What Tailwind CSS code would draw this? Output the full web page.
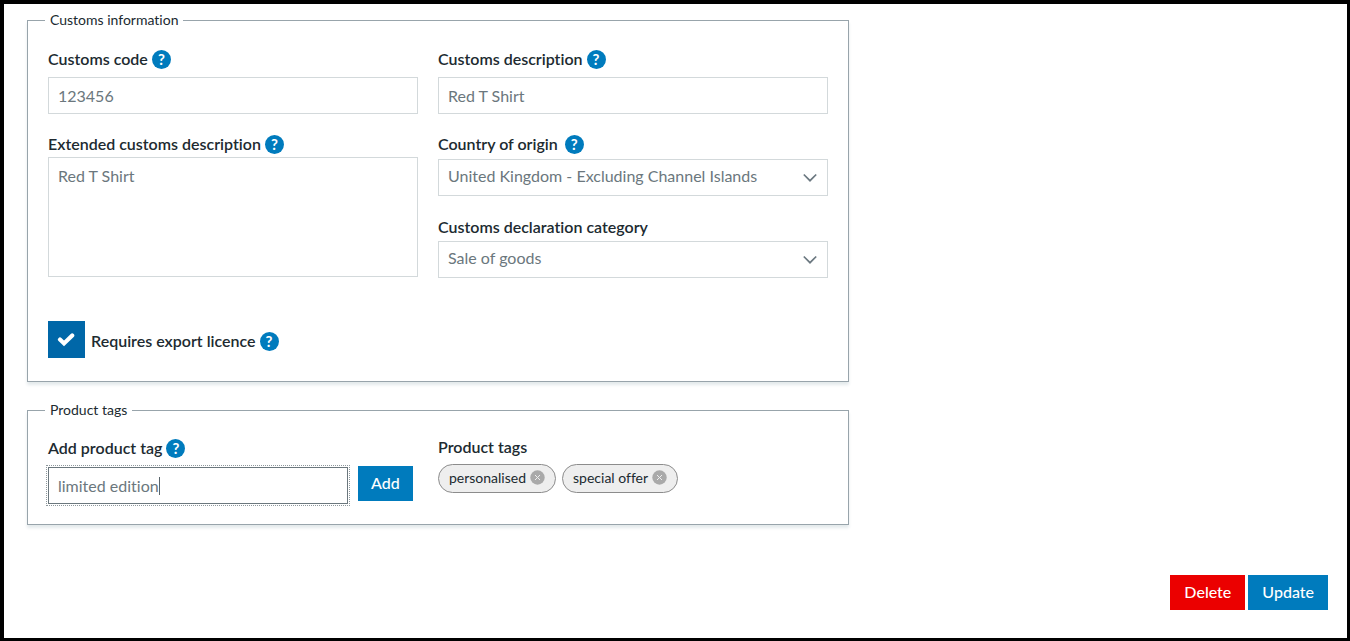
<!DOCTYPE html>
<html lang="en">
<head>
    <meta charset="UTF-8">
    <meta name="viewport" content="width=device-width, initial-scale=1.0">
    <title>Edit product</title>
    <script src="https://cdn.jsdelivr.net/npm/@tailwindcss/browser@4"></script>
</head>
<body class="min-h-screen border-t-4 border-l-4 border-r-3 border-b-3 border-black bg-white font-[Lato,sans-serif] text-base text-[#202a30] [font-variant-ligatures:none]">
    <form class="pt-[6px] pl-[23px] pr-[19px]">
        <fieldset class="max-w-[822px] border border-[#98a4ab] px-5 pb-[23px] shadow-[0_3px_3px_#e4eaec]">
            <legend class="-ml-[3px] px-[5px] text-sm leading-5">Customs information</legend>

            <div class="grid grid-cols-[37fr_39fr] gap-x-5 pt-[18px]">
                <div>
                    <div class="flex h-[22px] items-center gap-1 mb-[7px]">
                        <label for="customsCode" class="font-semibold">Customs code</label>
                        <button type="button" aria-label="Help" class="size-[19px] rounded-full bg-[#007bbd] text-center text-[15px] leading-[19px] font-bold text-white">?</button>
                    </div>
                    <input type="text" id="customsCode" value="123456" class="block h-[37px] w-full border border-[#d3d9db] px-[9px] text-[#6b777d]">
                </div>
                <div>
                    <div class="flex h-[22px] items-center gap-1 mb-[7px]">
                        <label for="customsDescription" class="font-semibold">Customs description</label>
                        <button type="button" aria-label="Help" class="size-[19px] rounded-full bg-[#007bbd] text-center text-[15px] leading-[19px] font-bold text-white">?</button>
                    </div>
                    <input type="text" id="customsDescription" value="Red T Shirt" class="block h-[37px] w-full border border-[#d3d9db] px-[9px] text-[#6b777d]">
                </div>

                <div class="mt-[19px]">
                    <div class="flex h-[22px] items-center gap-1 mb-[2px]">
                        <label for="extendedDescription" class="font-semibold">Extended customs description</label>
                        <button type="button" aria-label="Help" class="size-[19px] rounded-full bg-[#007bbd] text-center text-[15px] leading-[19px] font-bold text-white">?</button>
                    </div>
                    <textarea id="extendedDescription" class="block h-[120px] w-full resize-none border border-[#d3d9db] px-[9px] py-[6px] text-[#6b777d]">Red T Shirt</textarea>
                </div>
                <div class="mt-[19px]">
                    <div class="flex h-[22px] items-center gap-[7px] mb-1">
                        <label for="country" class="font-semibold">Country of origin</label>
                        <button type="button" aria-label="Help" class="size-[19px] rounded-full bg-[#007bbd] text-center text-[15px] leading-[19px] font-bold text-white">?</button>
                    </div>
                    <div class="relative">
                        <select id="country" class="block h-[37px] w-full appearance-none border border-[#d3d9db] px-[9px] pb-1 text-[#6b777d]">
                            <option>United Kingdom - Excluding Channel Islands</option>
                        </select>
                        <svg class="pointer-events-none absolute top-[14px] right-[10px] h-[10px] w-4" viewBox="0 0 16 10" fill="none" stroke="#6b7880" stroke-width="1.7"><path d="M1.8 1.5 8 7.7l6.2-6.2"/></svg>
                    </div>
                    <div class="mt-5 mb-[3px] flex h-[22px] items-center">
                        <label for="category" class="font-semibold">Customs declaration category</label>
                    </div>
                    <div class="relative">
                        <select id="category" class="block h-[37px] w-full appearance-none border border-[#d3d9db] px-[9px] pb-1 text-[#6b777d]">
                            <option>Sale of goods</option>
                        </select>
                        <svg class="pointer-events-none absolute top-[14px] right-[10px] h-[10px] w-4" viewBox="0 0 16 10" fill="none" stroke="#6b7880" stroke-width="1.7"><path d="M1.8 1.5 8 7.7l6.2-6.2"/></svg>
                    </div>
                </div>
            </div>

            <div class="mt-[43px] flex items-center">
                <div class="relative size-[37px]">
                    <input type="checkbox" id="exportLicence" checked class="peer block size-[37px] appearance-none border border-[#d3d9db] checked:border-[#0067a8] checked:bg-[#0067a8]">
                    <svg class="pointer-events-none absolute top-[11px] left-[9px] hidden h-[15px] w-[18px] peer-checked:block" viewBox="0 0 18 15" fill="none" stroke="#fff" stroke-width="4.2"><path d="M3 7.6 7 11.4 15.2 3.4"  stroke-linecap="round"/></svg>
                </div>
                <label for="exportLicence" class="ml-[6px] mr-1 pt-[2px] font-semibold">Requires export licence</label>
                <button type="button" aria-label="Help" class="mt-1 size-[19px] rounded-full bg-[#007bbd] text-center text-[15px] leading-[19px] font-bold text-white">?</button>
            </div>
        </fieldset>

        <fieldset class="mt-[18px] max-w-[822px] border border-[#98a4ab] px-5 pb-5 shadow-[0_3px_3px_#e4eaec]">
            <legend class="-ml-[3px] px-[5px] text-sm leading-5">Product tags</legend>

            <div class="grid grid-cols-[37fr_39fr] gap-x-5 pt-[15px]">
                <div>
                    <div class="flex h-6 items-center gap-1 mt-[1px] mb-[6px]">
                        <label for="newTag" class="font-semibold">Add product tag</label>
                        <button type="button" aria-label="Help" class="size-[19px] rounded-full bg-[#007bbd] text-center text-[15px] leading-[19px] font-bold text-white">?</button>
                    </div>
                    <div class="flex items-start gap-[10px]">
                        <div class="relative mt-[1px] w-[300px]">
                            <input type="text" id="newTag" value="limited edition" class="block h-[37px] w-full border border-[#6b777d] px-[9px] text-[#6b777d] caret-transparent outline-1 outline-offset-1 outline-dotted outline-[#8d979c]">
                            <span class="absolute top-[10px] left-[111px] h-[18px] w-px bg-[#59646a]"></span>
                        </div>
                        <button type="button" class="h-[35px] bg-[#007bbd] px-[13px] pb-[2px] font-medium text-white">Add</button>
                    </div>
                </div>
                <div>
                    <h2 class="mb-[5px] leading-6 font-semibold">Product tags</h2>
                    <ul class="flex gap-[6px] text-sm">
                        <li class="flex h-[29px] items-center gap-1 rounded-full border border-[#8c8c8c] bg-[#eee] px-[10px] pb-[1px]">personalised
                            <button type="button" aria-label="Remove personalised" class="mb-[1px]"><svg class="size-[15px]" viewBox="0 0 15 15"><circle cx="7.5" cy="7.5" r="7.2" fill="#a9a9a9"/><path d="m5 5 5 5m0-5-5 5" stroke="#eee"/></svg></button>
                        </li>
                        <li class="flex h-[29px] items-center gap-1 rounded-full border border-[#8c8c8c] bg-[#eee] px-[10px] pb-[1px]">special offer
                            <button type="button" aria-label="Remove special offer" class="mb-[1px]"><svg class="size-[15px]" viewBox="0 0 15 15"><circle cx="7.5" cy="7.5" r="7.2" fill="#a9a9a9"/><path d="m5 5 5 5m0-5-5 5" stroke="#eee"/></svg></button>
                        </li>
                    </ul>
                </div>
            </div>
        </fieldset>

        <div class="mt-[50px] flex justify-end gap-[3px]">
            <button type="button" class="h-[35px] bg-[#eb0000] px-[14px] pb-[2px] font-medium text-white">Delete</button>
            <button type="submit" class="h-[35px] bg-[#007bbd] px-[14px] pb-[2px] font-medium text-white">Update</button>
        </div>
    </form>
</body>
</html>
